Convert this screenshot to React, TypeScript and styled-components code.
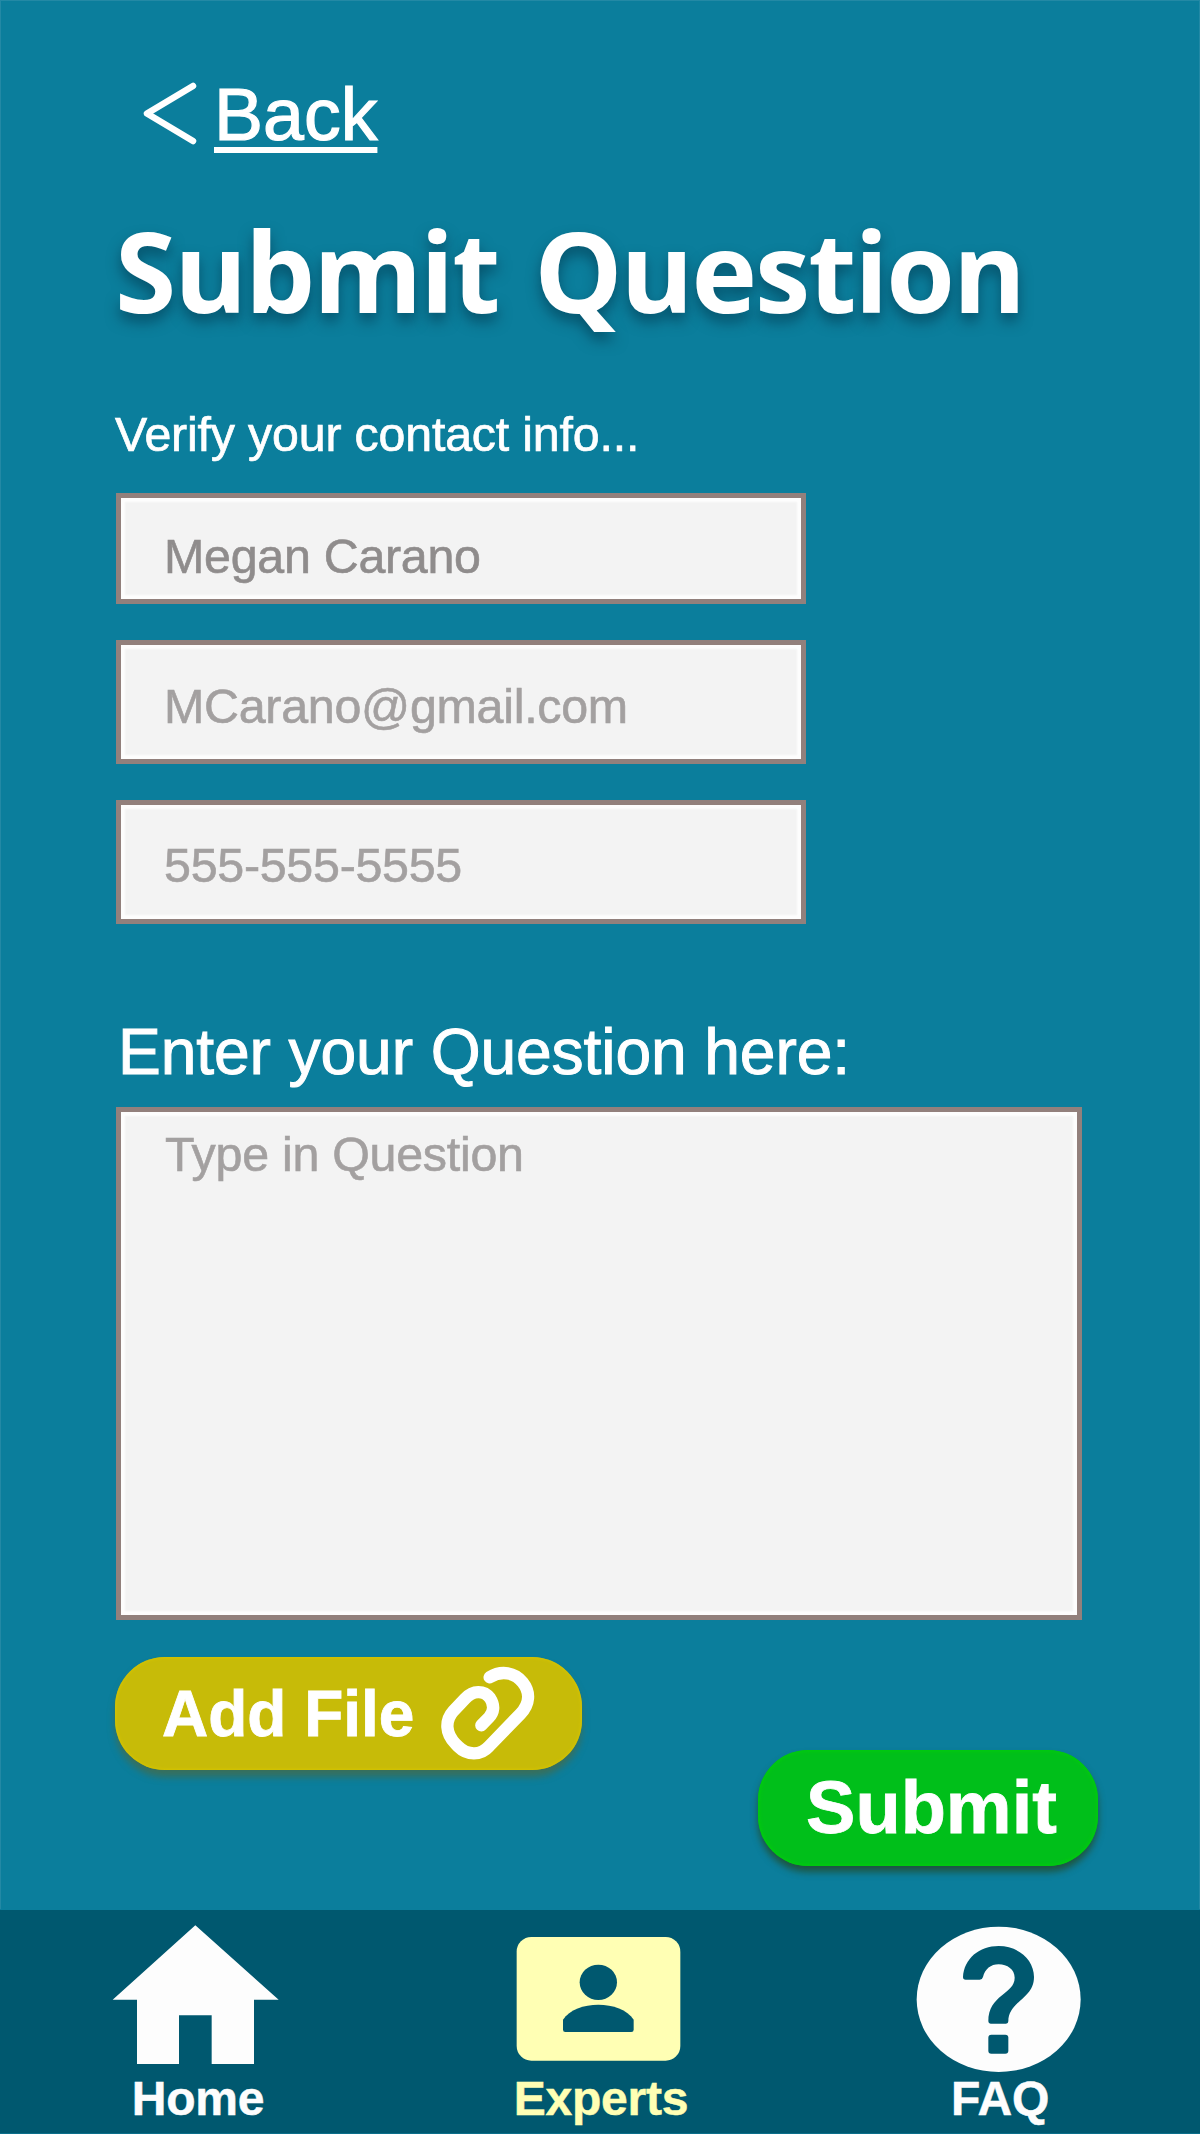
import React from "react";
import styled, { createGlobalStyle } from "styled-components";

const teal = "#0b7e9c";
const navTeal = "#00586f";
const cream = "#ffffb4";

const GlobalStyle = createGlobalStyle`
  * { box-sizing: border-box; }
  body {
    margin: 0;
    background: ${teal};
    font-family: "Liberation Sans", Arial, sans-serif;
  }
`;

const Screen = styled.div`
  display: flex;
  flex-direction: column;
  width: 1200px;
  height: 2134px;
  background: ${teal};
  color: #fff;
  overflow: hidden;
`;

const Content = styled.main`
  display: flex;
  flex-direction: column;
  align-items: flex-start;
  height: 1910px;
  padding: 69px 102px 0 116px;
  box-shadow: inset 0 0 0 1px #2389a5;
  clip-path: inset(0 0 1px 0);
`;

const BackLink = styled.a`
  display: flex;
  align-items: center;
  gap: 16px;
  height: 90px;
  margin-left: 26px;
  color: #fff;
  font-size: 73.5px;
  line-height: 90px;
  -webkit-text-stroke: 1.2px #fff;
`;

const BackLabel = styled.span`
  padding-top: 1px;
  text-decoration: underline;
  text-decoration-thickness: 6px;
  text-underline-offset: 7px;
  text-decoration-skip-ink: none;
`;

const Title = styled.h1`
  margin: 46px 0 0 -1px;
  font-family: "Open Sans", "Noto Sans", sans-serif;
  font-size: 111px;
  font-weight: 700;
  line-height: 130px;
  letter-spacing: -2px;
  word-spacing: 9px;
  white-space: nowrap;
  text-shadow: 0 8px 14px rgba(0, 40, 60, 0.5);
`;

const Hint = styled.p`
  margin: 69px 0 0 -1px;
  font-size: 48.3px;
  line-height: 60px;
  letter-spacing: -0.17px;
  white-space: nowrap;
  -webkit-text-stroke: 0.7px #fff;
`;

const Fields = styled.div`
  display: flex;
  flex-direction: column;
  gap: 36px;
  margin-top: 29px;
`;

const Field = styled.input<{ $height: number; $drop: number; $color: string }>`
  width: 690px;
  height: ${(p) => p.$height}px;
  padding: ${(p) => p.$drop}px 20px 0 43px;
  border: 5px solid #92807c;
  border-radius: 0;
  outline: none;
  background: #f3f3f3;
  box-shadow: inset 0 0 2px 4px #fdfdfd;
  color: ${(p) => p.$color};
  font: 48.4px "Liberation Sans", Arial, sans-serif;
  letter-spacing: -0.28px;
  -webkit-text-stroke: 0.6px ${(p) => p.$color};
`;

const QuestionLabel = styled.label`
  margin: 88px 0 0 2px;
  font-size: 64.2px;
  line-height: 80px;
  letter-spacing: -0.12px;
  white-space: nowrap;
  -webkit-text-stroke: 1px #fff;
`;

const QuestionBox = styled.textarea`
  width: 966px;
  height: 513px;
  margin-top: 15px;
  padding: 12px 20px 0 44px;
  border: 5px solid #92807c;
  outline: none;
  resize: none;
  background: #f3f3f3;
  box-shadow: inset 0 0 2px 4px #fdfdfd;
  font: 48.4px/60px "Liberation Sans", Arial, sans-serif;
  letter-spacing: -0.28px;
  &::placeholder {
    color: #a3a0a0;
    opacity: 1;
    -webkit-text-stroke: 0.6px #a3a0a0;
  }
`;

const Button = styled.button`
  display: flex;
  align-items: center;
  border: 0;
  color: #fff;
  font-family: "Liberation Sans", Arial, sans-serif;
  font-weight: 700;
  white-space: nowrap;
  -webkit-text-stroke: 0.8px #fff;
`;

const AddFileButton = styled(Button)`
  gap: 24px;
  width: 467px;
  height: 113px;
  margin: 37px 0 0 -1px;
  padding: 0 0 0 47px;
  border-radius: 50px;
  background: #c7bb08;
  box-shadow: inset 0 0 3px 1px #d6c400, 0 7px 7px rgba(75, 105, 65, 0.7);
  font-size: 64px;
`;

const SubmitButton = styled(Button)`
  justify-content: center;
  align-self: flex-end;
  width: 340px;
  height: 116px;
  margin: -20px 0 0;
  padding: 0 0 2px 7px;
  border-radius: 50px;
  background: #00bf1a;
  box-shadow: inset 0 0 3px 2px #00c910, 0 6px 7px rgba(35, 75, 40, 0.8);
  font-size: 74px;
`;

const SubmitRow = styled.div`
  display: flex;
  flex-direction: column;
  width: 982px;
`;

const Nav = styled.nav`
  display: grid;
  grid-template-columns: 403px 399px 220px;
  height: 224px;
  padding-left: 88px;
  background: ${navTeal};
  border-bottom: 1px solid #0b6f8a;
`;

const NavItem = styled.a<{ $active?: boolean }>`
  display: flex;
  flex-direction: column;
  align-items: center;
  width: 220px;
  color: ${(p) => (p.$active ? cream : "#fdfdfd")};
  font-size: 48px;
  font-weight: 700;
  line-height: 57px;
  letter-spacing: -0.2px;
  -webkit-text-stroke: 0.5px ${(p) => (p.$active ? cream : "#fdfdfd")};
`;

const NavIcon = styled.svg`
  display: block;
  width: 220px;
  height: 160px;
  overflow: visible;
  fill: currentColor;
`;

const Chevron = () => (
  <svg width="56" height="66" viewBox="0 0 56 66" fill="none" stroke="#fff" strokeWidth="6.5" strokeLinecap="round" strokeLinejoin="round">
    <path d="M51 5 L5 32.5 L51 60" />
  </svg>
);

const Clip = () => (
  <svg width="100" height="100" viewBox="1015 250 300 300" fill="none" stroke="#fff" strokeWidth="37" strokeLinecap="round">
    <path d="M1170 290 C1205 268 1245 275 1269 305 C1293 335 1290 370 1262 400 L1168 497 C1143 525 1103 525 1075 497 L1068 490 C1037 458 1035 420 1062 390 L1096 354 C1120 328 1153 328 1171 352 C1186 375 1182 395 1168 410 L1145 434" />
  </svg>
);

const contacts = [
  { value: "Megan Carano", height: 111, drop: 14, color: "#8f8c8c" },
  { value: "MCarano@gmail.com", height: 124, drop: 7, color: "#a3a0a0" },
  { value: "555-555-5555", height: 124, drop: 6, color: "#a3a0a0" },
];

export default function App() {
  return (
    <Screen>
      <GlobalStyle />
      <Content>
        <BackLink>
          <Chevron />
          <BackLabel>Back</BackLabel>
        </BackLink>
        <Title>Submit Question</Title>
        <Hint>Verify your contact info...</Hint>
        <Fields>
          {contacts.map((c) => (
            <Field key={c.value} defaultValue={c.value} $height={c.height} $drop={c.drop} $color={c.color} />
          ))}
        </Fields>
        <QuestionLabel htmlFor="question">Enter your Question here:</QuestionLabel>
        <QuestionBox id="question" placeholder="Type in Question" />
        <AddFileButton>
          Add File
          <Clip />
        </AddFileButton>
        <SubmitRow>
          <SubmitButton>Submit</SubmitButton>
        </SubmitRow>
      </Content>
      <Nav>
        <NavItem>
          <NavIcon viewBox="-37 59 660 480">
            <path d="M285 105 L535 328 H461 V521 H334 V375 H236 V521 H110 V328 H37 Z" />
          </NavIcon>
          Home
        </NavItem>
        <NavItem $active>
          <NavIcon viewBox="3 59 660 480">
            <rect x="80" y="140" width="491" height="371" rx="44" />
            <ellipse cx="325" cy="276" rx="56" ry="53" fill={navTeal} />
            <path fill={navTeal} d="M219 418 V388 C238 358 282 343 325 343 S412 358 431 388 V418 Q431 425 424 425 H226 Q219 425 219 418 Z" />
          </NavIcon>
          Experts
        </NavItem>
        <NavItem>
          <NavIcon viewBox="0 59 660 480">
            <ellipse cx="326" cy="327" rx="246" ry="218" />
            <path
              fill={navTeal}
              d="M219 260 C222 205 268 167 326 167 C385 167 432 208 432 260 C432 327 355 332 355 393 Q355 400 348 400 H302 Q295 400 295 393 C295 312 374 312 374 262 C374 238 352 222 326 222 C302 222 285 236 279 260 Q277 268 269 268 H227 Q219 268 219 260 Z"
            />
            <rect x="295" y="433" width="60" height="57" rx="9" fill={navTeal} />
          </NavIcon>
          FAQ
        </NavItem>
      </Nav>
    </Screen>
  );
}
